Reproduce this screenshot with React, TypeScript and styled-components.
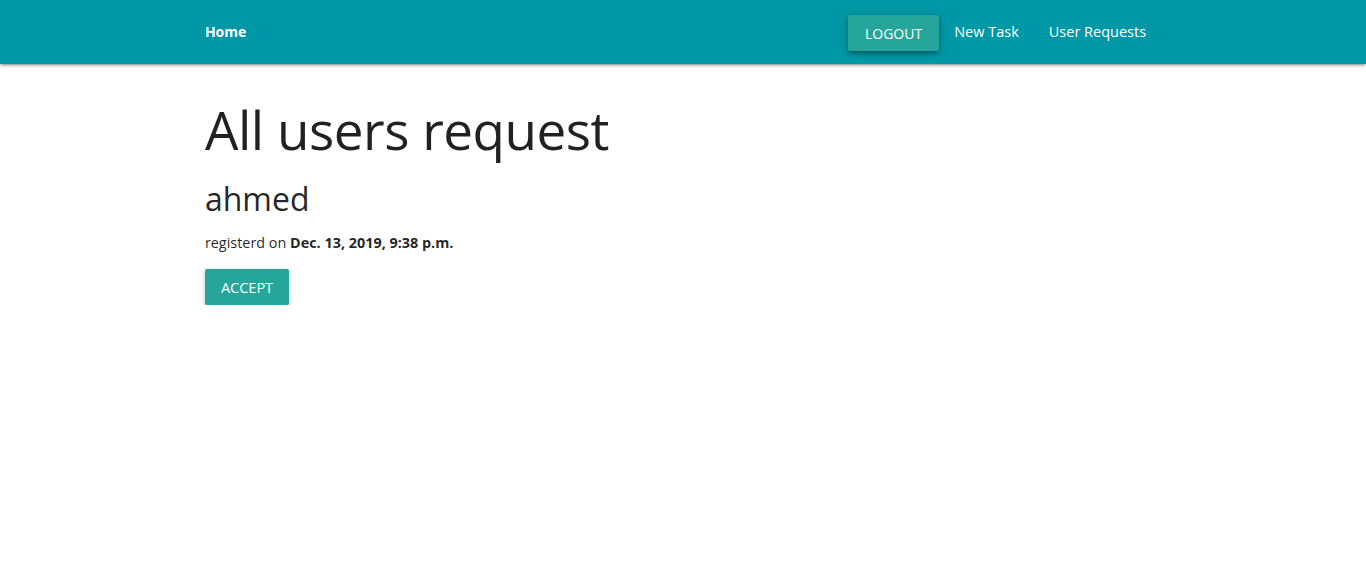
import React from "react";
import styled, { createGlobalStyle } from "styled-components";

const Global = createGlobalStyle`
  html { font-size: 15px; }
  body {
    margin: 0;
    font-family: "Open Sans", "Noto Sans", sans-serif;
    color: rgba(0,0,0,0.87);
    background: #fff;
    -webkit-font-smoothing: antialiased;
  }
  * { box-sizing: border-box; }
`;

const Nav = styled.nav`
  height: 64px;
  background: #0097a7;
  color: #fff;
  box-shadow: 0 2px 2px 0 rgba(0,0,0,.14), 0 3px 1px -2px rgba(0,0,0,.12), 0 1px 5px 0 rgba(0,0,0,.2);
`;

const Container = styled.div`
  width: 70%;
  margin: 0 auto;
`;

const NavInner = styled(Container)`
  height: 64px;
  display: flex;
  align-items: center;
  justify-content: space-between;
`;

const Brand = styled.a`
  font-size: 14px;
  font-weight: 700;
  color: #fff;
  text-decoration: none;
  margin-top: -1px;
`;

const Menu = styled.ul`
  display: flex;
  align-items: center;
  list-style: none;
  margin: 0;
  padding: 0;
`;

const NavLink = styled.a`
  display: block;
  padding: 0 15px;
  font-size: 14.5px;
  color: #fff;
  text-decoration: none;
  line-height: 64px;
`;

const Button = styled.button<{ $raised?: boolean }>`
  height: 36px;
  padding: 0 16px;
  border: none;
  border-radius: 2px;
  background: #26a69a;
  color: #fff;
  font-family: inherit;
  font-size: ${(p) => (p.$raised ? "14px" : "14.5px")};
  text-transform: uppercase;
  letter-spacing: 0;
  cursor: pointer;
  box-shadow: ${(p) =>
    p.$raised
      ? "0 4px 5px 0 rgba(0,0,0,.14), 0 1px 10px 0 rgba(0,0,0,.12), 0 2px 4px -1px rgba(0,0,0,.3)"
      : "0 2px 2px 0 rgba(0,0,0,.14), 0 3px 1px -2px rgba(0,0,0,.12), 0 1px 5px 0 rgba(0,0,0,.2)"};
`;

const NavButton = styled(Button)`
  margin-top: 2px;
  padding: 0 17px;
`;

const Title = styled.h1`
  font-size: 53px;
  font-weight: 400;
  line-height: 1.1;
  margin: 37px 0 22px;
  letter-spacing: -0.5px;
`;

const Name = styled.h4`
  font-size: 32px;
  font-weight: 400;
  line-height: 1.1;
  margin: 0 0 17px;
`;

const Meta = styled.p`
  font-size: 14.4px;
  margin: 0 0 17px;
`;

export default function App() {
  return (
    <>
      <Global />
      <Nav>
        <NavInner>
          <Brand href="#">Home</Brand>
          <Menu>
            <li><NavButton $raised>Logout</NavButton></li>
            <li><NavLink href="#">New Task</NavLink></li>
            <li><NavLink href="#">User Requests</NavLink></li>
          </Menu>
        </NavInner>
      </Nav>
      <Container>
        <Title>All users request</Title>
        <Name>ahmed</Name>
        <Meta>registerd on <b>Dec. 13, 2019, 9:38 p.m.</b></Meta>
        <Button>Accept</Button>
      </Container>
    </>
  );
}
